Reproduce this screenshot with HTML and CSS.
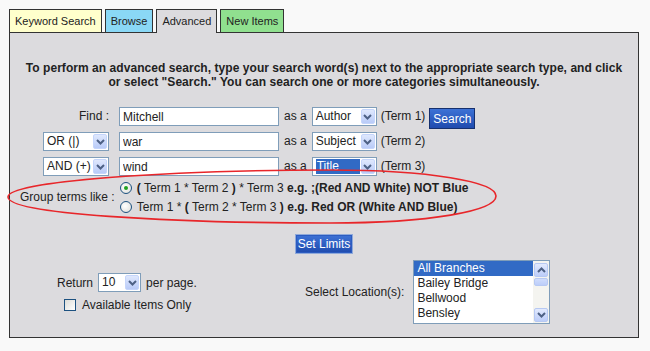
FILE: index.html
```html
<!DOCTYPE html>
<html lang="en">
<head>
    <meta charset="UTF-8"/>
    <title>Advanced Search</title>
    <link rel="stylesheet" href="styles.css">
</head>
<body>
<div class="page">
    <!-- search tabs -->
    <div class="tabs">
        <span class="tab tab-keyword">Keyword Search</span>
        <span class="tab tab-browse">Browse</span>
        <span class="tab tab-advanced">Advanced</span>
        <span class="tab tab-new">New Items</span>
    </div>

    <div class="panel">
        <p class="intro">To perform an advanced search, type your search word(s) next to the appropriate search type, and click<br>or select "Search." You can search one or more categories simultaneously.</p>

        <!-- term rows -->
        <div class="terms">
            <div class="term-row">
                <span class="bool-cell find-label">Find :</span>
                <input class="term-input" type="text" value="Mitchell">
                <span class="as-a">as a</span>
                <span class="combo combo-type">
                    <span class="combo-text">Author</span>
                    <span class="combo-btn"><svg width="9" height="6" viewBox="0 0 9 6"><path d="M1 1 L4.5 4.5 L8 1" fill="none" stroke="#4d6185" stroke-width="2"/></svg></span>
                </span>
                <span class="term-no">(Term 1)</span>
                <button class="btn btn-search">Search</button>
            </div>
            <div class="term-row">
                <span class="bool-cell">
                    <span class="combo combo-bool">
                        <span class="combo-text">OR (|)</span>
                        <span class="combo-btn"><svg width="9" height="6" viewBox="0 0 9 6"><path d="M1 1 L4.5 4.5 L8 1" fill="none" stroke="#4d6185" stroke-width="2"/></svg></span>
                    </span>
                </span>
                <input class="term-input" type="text" value="war">
                <span class="as-a">as a</span>
                <span class="combo combo-type">
                    <span class="combo-text">Subject</span>
                    <span class="combo-btn"><svg width="9" height="6" viewBox="0 0 9 6"><path d="M1 1 L4.5 4.5 L8 1" fill="none" stroke="#4d6185" stroke-width="2"/></svg></span>
                </span>
                <span class="term-no">(Term 2)</span>
            </div>
            <div class="term-row">
                <span class="bool-cell">
                    <span class="combo combo-bool">
                        <span class="combo-text">AND (+)</span>
                        <span class="combo-btn"><svg width="9" height="6" viewBox="0 0 9 6"><path d="M1 1 L4.5 4.5 L8 1" fill="none" stroke="#4d6185" stroke-width="2"/></svg></span>
                    </span>
                </span>
                <input class="term-input" type="text" value="wind">
                <span class="as-a">as a</span>
                <span class="combo combo-type">
                    <span class="combo-text"><span class="combo-focus">Title</span></span>
                    <span class="combo-btn"><svg width="9" height="6" viewBox="0 0 9 6"><path d="M1 1 L4.5 4.5 L8 1" fill="none" stroke="#4d6185" stroke-width="2"/></svg></span>
                </span>
                <span class="term-no">(Term 3)</span>
            </div>
        </div>

        <!-- grouping -->
        <div class="group-row">
            <span class="group-label">Group terms like :</span>
            <div class="group-options">
                <div class="radio-line"><span class="radio radio-on"></span><b>(</b>&nbsp;Term 1 * Term 2&nbsp;<b>)</b>&nbsp;* Term 3 <b>e.g. ;(Red AND White) NOT Blue</b></div>
                <div class="radio-line"><span class="radio"></span>Term 1 *&nbsp;<b>(</b>&nbsp;Term 2 * Term 3&nbsp;<b>)</b>&nbsp;<b>e.g. Red OR (White AND Blue)</b></div>
            </div>
        </div>

        <div class="limits">
            <button class="btn btn-limits">Set Limits</button>
        </div>

        <!-- paging + location -->
        <div class="bottom">
            <div class="return-col">
                <div class="return-row">
                    Return
                    <span class="combo combo-return">
                        <span class="combo-text">10</span>
                        <span class="combo-btn"><svg width="9" height="6" viewBox="0 0 9 6"><path d="M1 1 L4.5 4.5 L8 1" fill="none" stroke="#4d6185" stroke-width="2"/></svg></span>
                    </span>
                    per page.
                </div>
                <div class="avail-row">
                    <span class="checkbox"></span>
                    Available Items Only
                </div>
            </div>
            <div class="location">
                <span class="location-label">Select Location(s):</span>
                <div class="listbox">
                    <ul class="list-items">
                        <li class="list-selected">All Branches</li>
                        <li>Bailey Bridge</li>
                        <li>Bellwood</li>
                        <li>Bensley</li>
                    </ul>
                    <div class="scrollbar">
                        <span class="scroll-btn"><svg width="9" height="6" viewBox="0 0 9 6"><path d="M1 5 L4.5 1.5 L8 5" fill="none" stroke="#4d6185" stroke-width="2"/></svg></span>
                        <span class="scroll-thumb"></span>
                        <span class="scroll-track"></span>
                        <span class="scroll-btn"><svg width="9" height="6" viewBox="0 0 9 6"><path d="M1 1 L4.5 4.5 L8 1" fill="none" stroke="#4d6185" stroke-width="2"/></svg></span>
                    </div>
                </div>
            </div>
        </div>

        <!-- hand-drawn red annotation -->
        <svg class="ring" viewBox="9 32 630 306" width="630" height="306">
            <path d="M 8 197 C 8 181, 170 170, 330 170 C 430 170, 496 182, 496 196 C 496 211, 430 223, 330 223 C 170 223, 8 214, 8 197 Z"
                  fill="none" stroke="#e8262a" stroke-width="1.6"/>
        </svg>
    </div>
</div>
</body>
</html>
```

FILE: styles.css
```css
* {
    box-sizing: border-box;
}

body {
    margin: 0;
    background-color: #f9f9f9;
    font-family: "Liberation Sans", Arial, sans-serif;
    font-size: 12px;
    color: #222222;
}

/* tabs */
.tabs {
    display: flex;
    align-items: flex-end;
    gap: 3px;
    padding: 9px 0 0 9px;
}

.tab {
    height: 23px;
    padding: 3px 5px 0;
    border: 1px solid #333333;
    border-bottom: none;
    font-size: 11px;
    line-height: 17px;
    color: #222222;
}

.tab-keyword {
    background-color: #ffffcc;
}

.tab-browse {
    background-color: #8ad8f6;
}

.tab-advanced {
    background-color: #dcdbde;
    height: 24px;
    margin-bottom: -1px;
    position: relative;
    z-index: 1;
}

.tab-new {
    background-color: #90e08f;
}

/* main panel */
.panel {
    position: relative;
    margin-left: 9px;
    width: 630px;
    height: 306px;
    border: 1px solid #333333;
    background-color: #dcdbde;
}

.intro {
    margin: 0;
    padding-top: 28px;
    text-align: center;
    font-weight: bold;
    line-height: 14px;
    letter-spacing: 0.05px;
}

.terms {
    margin-top: 18px;
    padding-left: 32px;
    display: flex;
    flex-direction: column;
    gap: 6px;
}

.term-row {
    display: flex;
    align-items: flex-start;
    height: 19px;
}

.bool-cell {
    width: 67px;
    margin-right: 10px;
    text-align: right;
    line-height: 19px;
    display: flex;
    justify-content: flex-end;
}

.find-label {
    display: block;
}

.term-input {
    width: 160px;
    height: 19px;
    margin: 0;
    padding: 0 3px;
    border: 1px solid #7f9db9;
    background-color: #ffffff;
    font-family: inherit;
    font-size: 12px;
    color: #222222;
}

.as-a {
    margin: 0 5px;
    line-height: 19px;
}

.term-no {
    margin-left: 4px;
    line-height: 19px;
}

/* fake XP combo boxes */
.combo {
    display: inline-flex;
    height: 19px;
    border: 1px solid #7f9db9;
    background-color: #ffffff;
    padding: 1px;
    vertical-align: middle;
}

.combo-text {
    flex: 1;
    padding-left: 2px;
    line-height: 15px;
    text-align: left;
    white-space: nowrap;
}

.combo-focus {
    display: inline-block;
    width: 44px;
    background-color: #316ac5;
    color: #ffffff;
    padding-left: 1px;
}

.combo-btn {
    width: 14px;
    display: flex;
    align-items: center;
    justify-content: center;
    background: linear-gradient(#dfe8fd, #b9cbf8);
    border: 1px solid #c5d5fb;
    border-radius: 2px;
}

.combo-type {
    width: 65px;
}

.combo-bool {
    width: 66px;
}

.combo-return {
    width: 43px;
    margin: 0 5px;
}

/* buttons */
.btn {
    font-family: inherit;
    font-size: 12px;
    color: #ffffff;
    background: linear-gradient(#3d72d6, #1f4bae);
    cursor: pointer;
    padding: 0;
    white-space: nowrap;
}

.btn-search {
    width: 46px;
    height: 21px;
    margin-left: 4px;
    margin-top: 1px;
    border: 1px solid #16306e;
}

.btn-limits {
    width: 58px;
    height: 20px;
    border: 1px solid #8fa9da;
    box-shadow: inset 0 0 0 1px #2c5cc0;
}

/* grouping */
.group-row {
    margin-top: 2px;
    padding-left: 10px;
    display: flex;
    align-items: center;
}

.group-label {
    margin-right: 5px;
}

.radio-line {
    display: flex;
    align-items: center;
    height: 19px;
    white-space: pre;
}

.radio {
    width: 12px;
    height: 12px;
    margin-right: 5px;
    border: 1px solid #1c5180;
    border-radius: 50%;
    background: radial-gradient(circle at 40% 40%, #ffffff, #dcdcd7);
    display: flex;
    align-items: center;
    justify-content: center;
}

.radio-on::after {
    content: "";
    width: 4px;
    height: 4px;
    border-radius: 50%;
    background-color: #21a121;
}

.limits {
    margin-top: 18px;
    height: 20px;
    display: flex;
    justify-content: center;
}

/* bottom area */
.bottom {
    margin-top: 6px;
    display: flex;
}

.return-col {
    width: 295px;
    padding: 13px 0 0 47px;
}

.return-row {
    display: flex;
    align-items: center;
    height: 19px;
}

.avail-row {
    display: flex;
    align-items: center;
    height: 16px;
    margin-top: 5px;
    padding-left: 7px;
}

.checkbox {
    width: 12px;
    height: 12px;
    margin-right: 6px;
    border: 1px solid #1c5180;
    background: linear-gradient(135deg, #dcdcd7, #ffffff);
}

.location {
    display: flex;
    align-items: center;
}

.location-label {
    margin-right: 9px;
}

.listbox {
    display: flex;
    width: 137px;
    height: 64px;
    border: 1px solid #7f9db9;
    background-color: #ffffff;
}

.list-items {
    list-style: none;
    margin: 0;
    padding: 0;
    flex: 1;
}

.list-items li {
    height: 15px;
    line-height: 15px;
    padding-left: 3px;
    white-space: nowrap;
}

.list-items li.list-selected {
    background-color: #316ac5;
    color: #ffffff;
}

.scrollbar {
    width: 16px;
    padding: 2px 1px 1px;
    display: flex;
    flex-direction: column;
    background-color: #f4f4f0;
}

.scroll-btn {
    height: 14px;
    display: flex;
    align-items: center;
    justify-content: center;
    background: linear-gradient(#e2eafe, #bccdf9);
    border: 1px solid #b7c9f3;
    border-radius: 2px;
}

.scroll-thumb {
    height: 8px;
    margin-top: 1px;
    background: linear-gradient(#cfdcfc, #bccdf9);
    border: 1px solid #b7c9f3;
    border-radius: 2px;
}

.scroll-track {
    flex: 1;
}

/* red annotation overlay */
.ring {
    position: absolute;
    left: -1px;
    top: -1px;
    pointer-events: none;
    overflow: visible;
}
```
